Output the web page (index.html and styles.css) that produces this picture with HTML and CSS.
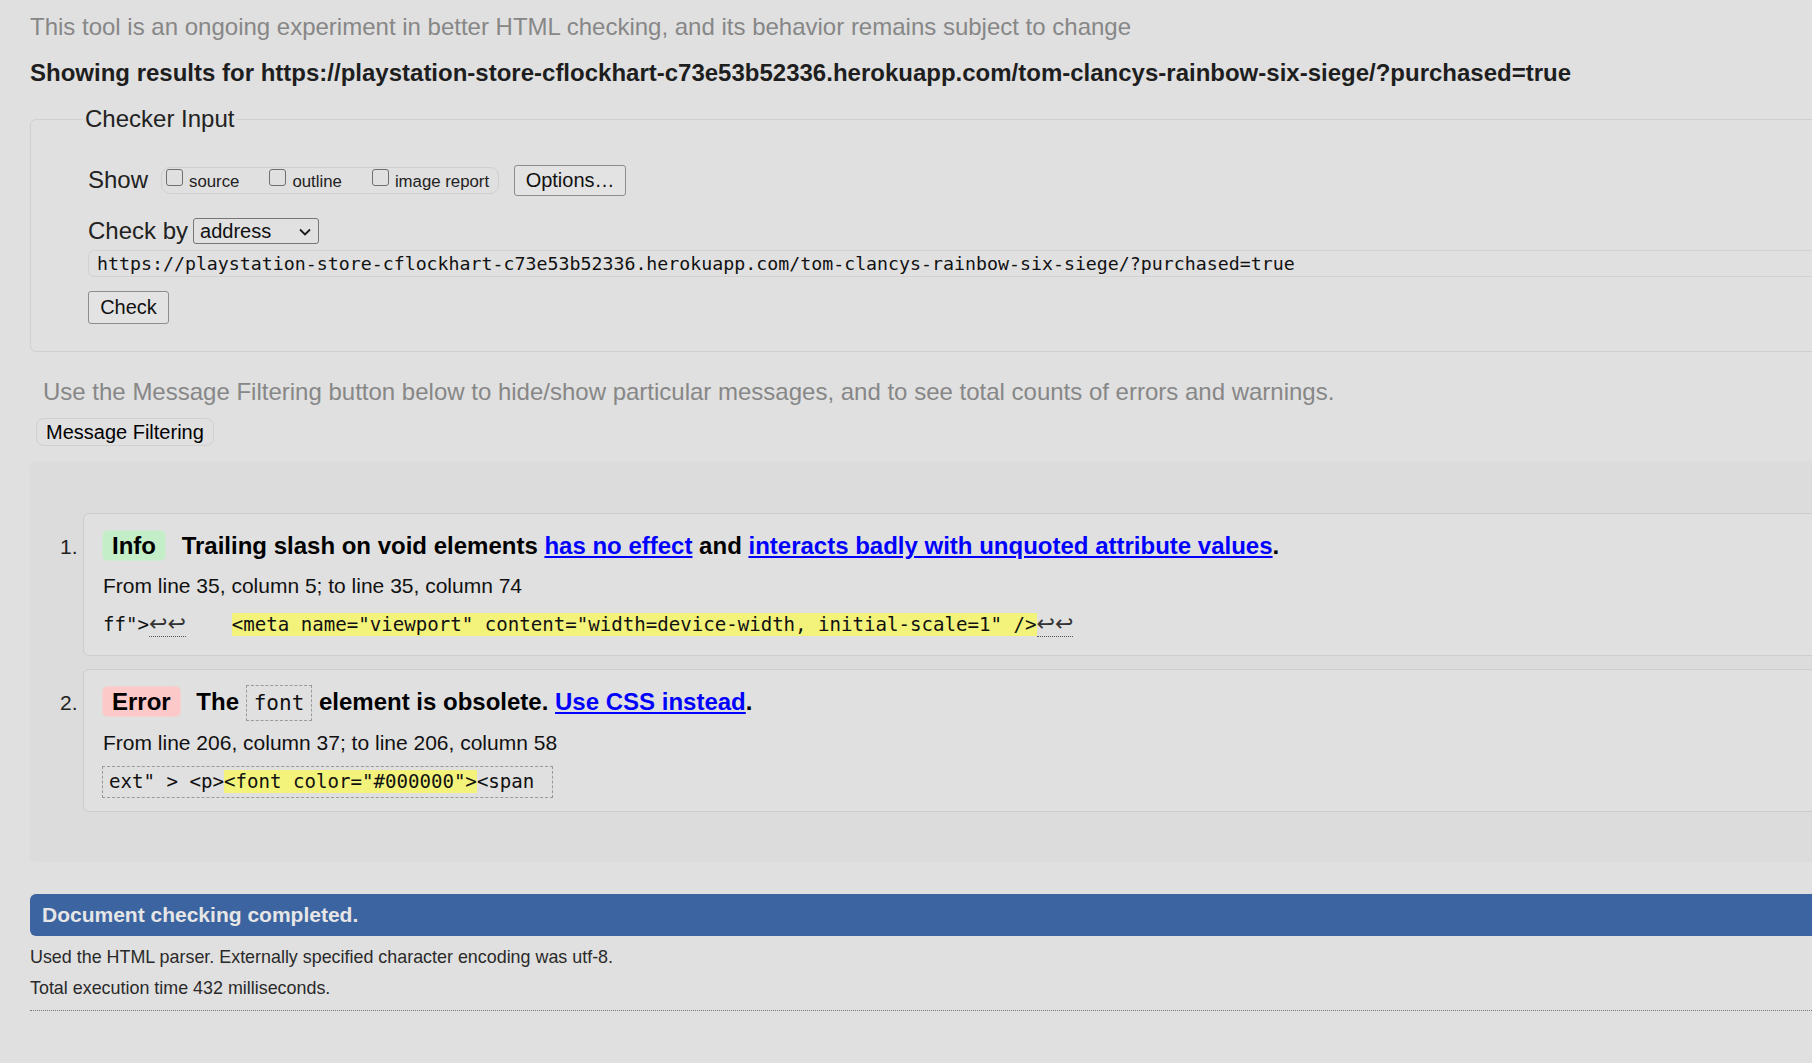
FILE: index.html
```html
<!DOCTYPE html>
<html lang="en">
<head>
<meta charset="utf-8">
<title>Nu Html Checker</title>
<link rel="stylesheet" href="styles.css">
</head>
<body>
<div class="page">
  <p class="experimental">This tool is an ongoing experiment in better HTML checking, and its behavior remains subject to change</p>
  <h2 class="results-for">Showing results for https://playstation-store-cflockhart-c73e53b52336.herokuapp.com/tom-clancys-rainbow-six-siege/?purchased=true</h2>

  <fieldset class="checker">
    <legend class="legend">Checker Input</legend>
    <div class="row-show">
      <span class="label-lg">Show</span>
      <span class="checkgroup">
        <label class="cb-item"><input class="cb" type="checkbox"><span class="cb-text">source</span></label>
        <label class="cb-item"><input class="cb" type="checkbox"><span class="cb-text">outline</span></label>
        <label class="cb-item"><input class="cb" type="checkbox"><span class="cb-text">image report</span></label>
      </span>
      <button class="btn btn-options" type="button">Options…</button>
    </div>
    <div class="row-checkby">
      <span class="label-lg">Check by</span>
      <span class="select-wrap">
        <select class="select"><option>address</option></select>
        <svg class="chev" width="12" height="8" viewBox="0 0 12 8"><polyline points="1,1.5 6,6.5 11,1.5" fill="none" stroke="#1a1a1a" stroke-width="1.8"/></svg>
      </span>
    </div>
    <input class="url" type="text" value="https://playstation-store-cflockhart-c73e53b52336.herokuapp.com/tom-clancys-rainbow-six-siege/?purchased=true">
    <button class="btn btn-check" type="button">Check</button>
  </fieldset>

  <p class="filter-note">Use the Message Filtering button below to hide/show particular messages, and to see total counts of errors and warnings.</p>
  <button class="btn-filter" type="button">Message Filtering</button>

  <div class="results">
    <ol class="msgs">
      <li class="msg-row">
        <span class="num">1.</span>
        <div class="msg">
          <p class="msg-title"><span class="badge info">Info</span> Trailing slash on void elements <a class="lnk" href="#">has no effect</a> and <a class="lnk" href="#">interacts badly with unquoted attribute values</a>.</p>
          <p class="loc">From line 35, column 5; to line 35, column 74</p>
          <p class="extract">ff"&gt;<b class="lf">↩↩</b>    <mark class="hl">&lt;meta name="viewport" content="width=device-width, initial-scale=1" /&gt;</mark><b class="lf">↩↩</b></p>
        </div>
      </li>
      <li class="msg-row">
        <span class="num">2.</span>
        <div class="msg">
          <p class="msg-title"><span class="badge error">Error</span> The <code class="kw">font</code> element is obsolete. <a class="lnk" href="#">Use CSS instead</a>.</p>
          <p class="loc">From line 206, column 37; to line 206, column 58</p>
          <p class="extract boxed">ext" &gt; &lt;p&gt;<mark class="hl">&lt;font color="#000000"&gt;</mark>&lt;span </p>
        </div>
      </li>
    </ol>
  </div>

  <div class="done">Document checking completed.</div>
  <p class="foot">Used the HTML parser. Externally specified character encoding was utf-8.</p>
  <p class="foot foot-2">Total execution time 432 milliseconds.</p>
  <hr class="sep">
</div>
</body>
</html>
```

FILE: styles.css
```css
html, body {
  margin: 0;
  background: #e0e0e0;
  overflow-x: hidden;
}
body {
  font-family: "Liberation Sans", Arial, sans-serif;
  color: #111;
}
.page {
  padding: 13px 0 0 30px;
  margin-right: -60px;
}
.experimental {
  margin: 0;
  font-size: 24px;
  line-height: 28px;
  color: #878787;
}
.results-for {
  margin: 18px 0 0;
  font-size: 24px;
  line-height: 28px;
  font-weight: bold;
  color: #1e1e1e;
}
.checker {
  margin: 18px 0 0;
  padding: 31px 0 27px 57px;
  border: 1px solid #d0d0d0;
  border-radius: 6px;
  min-width: 0;
}
.legend {
  font-size: 24px;
  padding: 0 2px;
  margin-left: -5px;
  color: #222;
}
.row-show {
  display: flex;
  align-items: center;
  height: 32px;
}
.label-lg {
  font-size: 24px;
  color: #222;
}
.checkgroup {
  margin-left: 13px;
  display: inline-flex;
  height: 27px;
  box-sizing: border-box;
  border: 1px solid #d0d0d0;
  border-radius: 9px;
  padding: 0 9px 0 4px;
  gap: 30px;
}
.cb-item {
  display: flex;
  align-items: flex-start;
  gap: 6px;
  font-size: 16.8px;
  line-height: 24px;
  color: #222;
}
.cb-text {
  padding-top: 2px;
}
.cb {
  appearance: none;
  -webkit-appearance: none;
  box-sizing: border-box;
  width: 17px;
  height: 17px;
  margin: 1px 0 0;
  border: 1px solid #6f6f6f;
  border-radius: 3px;
  background: transparent;
}
.btn {
  font-family: "Liberation Sans", Arial, sans-serif;
  font-size: 20px;
  color: #111;
  background: #e3e3e3;
  border: 1px solid #8d8d8d;
  border-radius: 3px;
  padding: 0 10px;
  box-sizing: border-box;
}
.btn-options {
  margin-left: 15px;
  height: 31px;
  width: 112px;
}
.row-checkby {
  margin-top: 20px;
  display: flex;
  align-items: center;
  height: 29px;
}
.select-wrap {
  position: relative;
  margin-left: 5px;
  display: inline-block;
  height: 26px;
}
.select {
  appearance: none;
  -webkit-appearance: none;
  width: 126px;
  height: 26px;
  box-sizing: border-box;
  border: 1px solid #767676;
  border-radius: 3px;
  background: #e1e1e1;
  font-family: "Liberation Sans", Arial, sans-serif;
  font-size: 20px;
  color: #111;
  padding: 0 0 0 6px;
  display: block;
}
.chev {
  position: absolute;
  right: 8px;
  top: 10px;
  pointer-events: none;
}
.url {
  display: block;
  margin-top: 5px;
  width: 100%;
  height: 27px;
  box-sizing: border-box;
  border: 1px solid #d2d2d2;
  border-radius: 6px;
  padding: 0 8px;
  background: transparent;
  font-family: "DejaVu Sans Mono", "Liberation Mono", monospace;
  font-size: 18.25px;
  color: #111;
}
.btn-check {
  display: block;
  margin-top: 14px;
  height: 33px;
  width: 81px;
}
.filter-note {
  margin: 26px 0 0 13px;
  font-size: 24px;
  line-height: 28px;
  color: #878787;
}
.btn-filter {
  display: block;
  margin: 12px 0 0 6px;
  height: 28px;
  padding: 0 9px;
  box-sizing: border-box;
  border: 1px solid #d0d0d0;
  border-radius: 8px;
  background: #e0e0e0;
  font-family: "Liberation Sans", Arial, sans-serif;
  font-size: 20px;
  color: #000;
}
.results {
  margin-top: 15px;
  padding: 52px 0 50px 30px;
  background: #dcdcdc;
  border-radius: 4px 0 0 4px;
}
.msgs {
  margin: 0;
  padding: 0;
  list-style: none;
}
.msg-row {
  display: flex;
  align-items: baseline;
}
.msg-row + .msg-row {
  margin-top: 13px;
}
.num {
  width: 23px;
  flex: none;
  font-size: 21px;
  color: #222;
}
.msg {
  flex: 1;
  border: 1px solid #cdcdcd;
  border-radius: 6px;
  background: #e0e0e0;
  padding: 16px 0 17px 19px;
}
.msg-title {
  margin: 0;
  font-size: 24px;
  line-height: 32px;
  font-weight: bold;
  color: #000;
}
.badge {
  display: inline-block;
  padding: 2px 10px;
  line-height: 27px;
  border-radius: 6px;
  margin: 0 9px 0 -1px;
}
.badge.info {
  background: #c3eec7;
  box-shadow: inset 0 0 0 1px #d2ead4;
}
.badge.error {
  background: #fdc8c8;
  box-shadow: inset 0 0 0 1px #f2d2d2;
}
.lnk {
  color: #0000ff;
  text-decoration: underline;
}
.kw {
  font-family: "DejaVu Sans Mono", "Liberation Mono", monospace;
  font-weight: normal;
  font-size: 21px;
  padding: 5px 7px;
  border: 1px dashed #9a9a9a;
  color: #111;
}
.loc {
  margin: 9px 0 0;
  font-size: 21px;
  line-height: 30px;
  color: #111;
}
.extract {
  margin: 11px 0 0;
  font-family: "DejaVu Sans Mono", "Liberation Mono", monospace;
  font-size: 19.1px;
  line-height: 26px;
  height: 26px;
  white-space: pre;
  color: #111;
}
.extract.boxed {
  margin: 8px 0 -4px -1px;
  width: fit-content;
  padding: 2px 6px;
  border: 1px dashed #9a9a9a;
}
.hl {
  background: #f3f37b;
  color: #111;
}
.lf {
  font-family: "DejaVu Sans", sans-serif;
  font-weight: normal;
  font-size: 22px;
  line-height: 0;
  color: #333;
  border-bottom: 1px dotted #555;
}
.done {
  margin-top: 32px;
  height: 42px;
  display: flex;
  align-items: center;
  padding-left: 12px;
  background: #3c64a0;
  color: #e6e6e6;
  font-weight: bold;
  font-size: 21px;
  border-radius: 6px 0 0 6px;
}
.foot {
  margin: 6px 0 0;
  font-size: 17.9px;
  line-height: 31px;
  color: #2a2a2a;
}
.foot-2 {
  margin-top: 0;
}
.sep {
  margin: 6px 0 0;
  border: 0;
  border-top: 1px dotted #777;
  height: 0;
}
```
